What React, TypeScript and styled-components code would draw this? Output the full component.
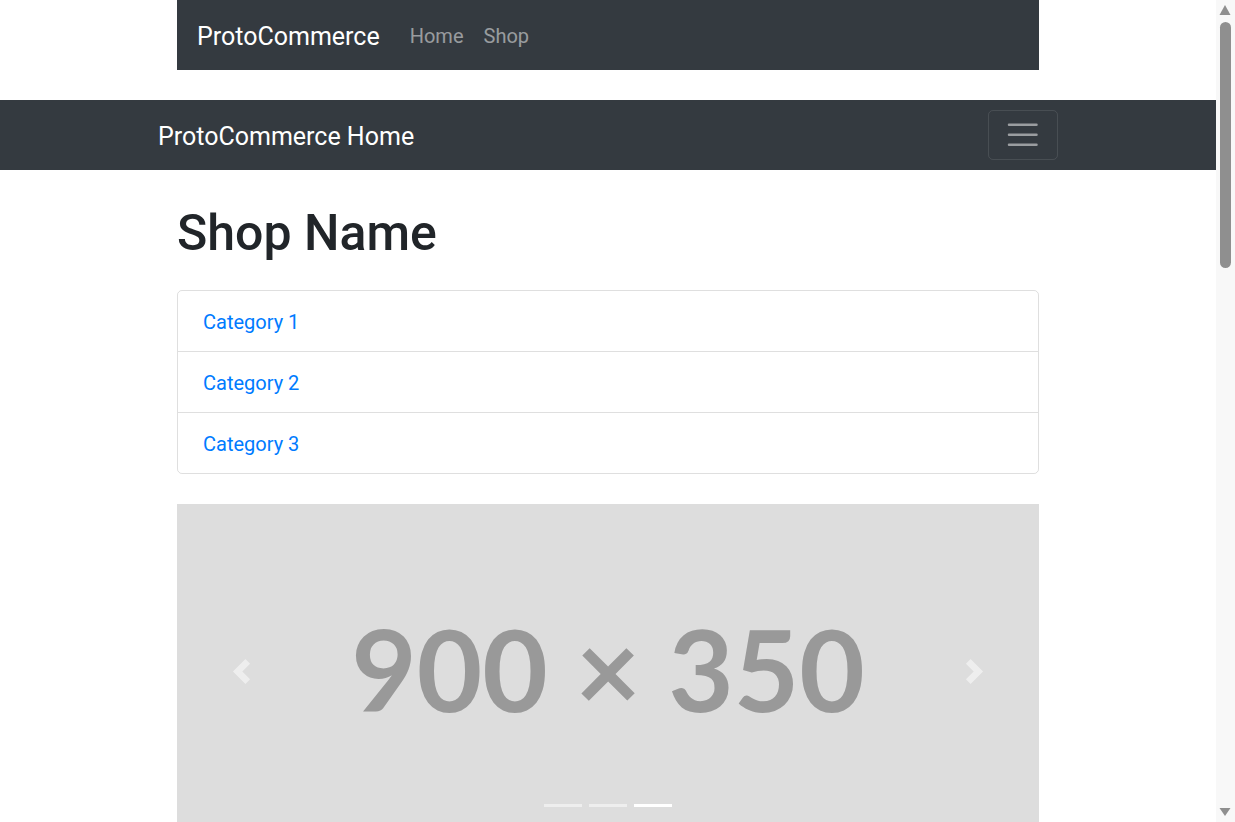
import React from "react";
import styled, { createGlobalStyle } from "styled-components";

const GlobalStyle = createGlobalStyle`
  body {
    margin: 0;
    font-family: Roboto, "Noto Sans", "Liberation Sans", sans-serif;
    font-size: 20px;
    line-height: 1.5;
    color: #212529;
    background: #fff;
  }
  * { box-sizing: border-box; }
`;

const Shell = styled.div`
  display: flex;
  align-items: flex-start;
`;

const Page = styled.div`
  flex: 1;
  min-width: 0;
`;

const ScrollRail = styled.div`
  flex: none;
  width: 19px;
  height: 100vh;
  position: sticky;
  top: 0;
  background: #f8f8f8;
  display: flex;
  flex-direction: column;
  align-items: center;
  svg { display: block; flex: none; }
`;

const Thumb = styled.div`
  flex: none;
  width: 11px;
  height: 246px;
  margin: 2px 0 0;
  border-radius: 6px;
  background: #8f8f8f;
`;

const RailSpacer = styled.div`
  flex: 1;
`;

const TopNav = styled.nav`
  width: 862px;
  margin: 0 auto 30px;
  background: #343a40;
  padding: 10px 20px;
  display: flex;
  align-items: center;
`;

const Brand = styled.a`
  font-size: 25px;
  line-height: 37.5px;
  padding: 7.75px 0 4.75px;
  margin-right: 20px;
  color: #fff;
  text-decoration: none;
  white-space: nowrap;
`;

const NavLink = styled.a`
  display: block;
  padding: 11px 10px 9px;
  line-height: 30px;
  color: rgba(255, 255, 255, 0.5);
  text-decoration: none;
`;

const MainNav = styled.nav`
  background: #343a40;
  padding: 10px 20px;
`;

const NavInner = styled.div`
  width: 900px;
  margin: 0 auto;
  display: flex;
  align-items: center;
  justify-content: space-between;
`;

const Toggler = styled.button`
  width: 70px;
  height: 50px;
  padding: 5px 15px;
  background: transparent;
  border: 1px solid rgba(255, 255, 255, 0.1);
  border-radius: 5px;
  display: flex;
  align-items: center;
  justify-content: center;
  svg { display: block; flex: none; }
`;

const Container = styled.main`
  width: 862px;
  margin: 0 auto;
`;

const Title = styled.h1`
  margin: 33px 0 27px;
  font-size: 50px;
  font-weight: 500;
  line-height: 1.2;
`;

const ListGroup = styled.div`
  border: 1px solid rgba(0, 0, 0, 0.125);
  border-radius: 5px;
  margin-bottom: 30px;
`;

const ListItem = styled.a`
  display: block;
  padding: 16px 25px 14px;
  color: #007bff;
  text-decoration: none;
  line-height: 30px;
  & + & { border-top: 1px solid rgba(0, 0, 0, 0.125); }
`;

const Carousel = styled.div`
  position: relative;
  height: 335.4px;
  background: #dddddd;
  margin-bottom: 30px;
  display: flex;
  align-items: center;
  justify-content: center;
  overflow: hidden;
`;

const PlaceholderText = styled.span`
  font-family: Lato, sans-serif;
  font-weight: 700;
  font-size: 113px;
  line-height: 1;
  color: #999999;
  white-space: nowrap;
  margin-top: -6px;
`;

const Control = styled.a<{ $side: "left" | "right" }>`
  position: absolute;
  top: 0;
  bottom: 0;
  ${(p) => (p.$side === "left" ? "left: 0;" : "right: 0;")}
  width: 15%;
  display: flex;
  align-items: center;
  justify-content: center;
  opacity: 0.5;
  svg { display: block; }
`;

const Indicators = styled.ol`
  position: absolute;
  left: 0;
  right: 0;
  bottom: 0;
  margin: 0 0 20px;
  padding: 0;
  list-style: none;
  display: flex;
  justify-content: center;
`;

const Indicator = styled.li<{ $active?: boolean }>`
  box-sizing: content-box;
  width: 37.5px;
  height: 3.75px;
  margin: 0 3.75px;
  border-top: 12.5px solid transparent;
  border-bottom: 12.5px solid transparent;
  background: #fff;
  background-clip: padding-box;
  opacity: ${(p) => (p.$active ? 1 : 0.5)};
`;

export default function App() {
  return (
    <>
      <GlobalStyle />
      <Shell>
        <Page>
          <TopNav>
            <Brand href="#">ProtoCommerce</Brand>
            <NavLink href="#">Home</NavLink>
            <NavLink href="#">Shop</NavLink>
          </TopNav>
          <MainNav>
            <NavInner>
              <Brand href="#">ProtoCommerce Home</Brand>
              <Toggler aria-label="Toggle navigation">
                <svg width="37.5" height="37.5" viewBox="0 0 30 30">
                  <path
                    d="M4 7h22M4 15h22M4 23h22"
                    stroke="rgba(255,255,255,0.5)"
                    strokeWidth="2"
                    strokeLinecap="round"
                    strokeMiterlimit="10"
                  />
                </svg>
              </Toggler>
            </NavInner>
          </MainNav>
          <Container>
            <Title>Shop Name</Title>
            <ListGroup>
              <ListItem href="#">Category 1</ListItem>
              <ListItem href="#">Category 2</ListItem>
              <ListItem href="#">Category 3</ListItem>
            </ListGroup>
            <Carousel>
              <PlaceholderText>900 × 350</PlaceholderText>
              <Control $side="left" href="#">
                <svg width="25" height="25" viewBox="0 0 8 8" fill="#fff">
                  <path d="M5.25 0l-4 4 4 4 1.5-1.5L4.25 4l2.5-2.5L5.25 0z" />
                </svg>
              </Control>
              <Control $side="right" href="#">
                <svg width="25" height="25" viewBox="0 0 8 8" fill="#fff">
                  <path d="M2.75 0l-1.5 1.5L3.75 4l-2.5 2.5L2.75 8l4-4-4-4z" />
                </svg>
              </Control>
              <Indicators>
                <Indicator />
                <Indicator />
                <Indicator $active />
              </Indicators>
            </Carousel>
          </Container>
        </Page>
        <ScrollRail>
          <svg width="19" height="20" viewBox="0 0 19 20">
            <polygon points="3.5,15 14.5,15 9,5" fill="#8f8f8f" />
          </svg>
          <Thumb />
          <RailSpacer />
          <svg width="19" height="20" viewBox="0 0 19 20">
            <polygon points="3.5,6 14.5,6 9,14" fill="#8f8f8f" />
          </svg>
        </ScrollRail>
      </Shell>
    </>
  );
}
